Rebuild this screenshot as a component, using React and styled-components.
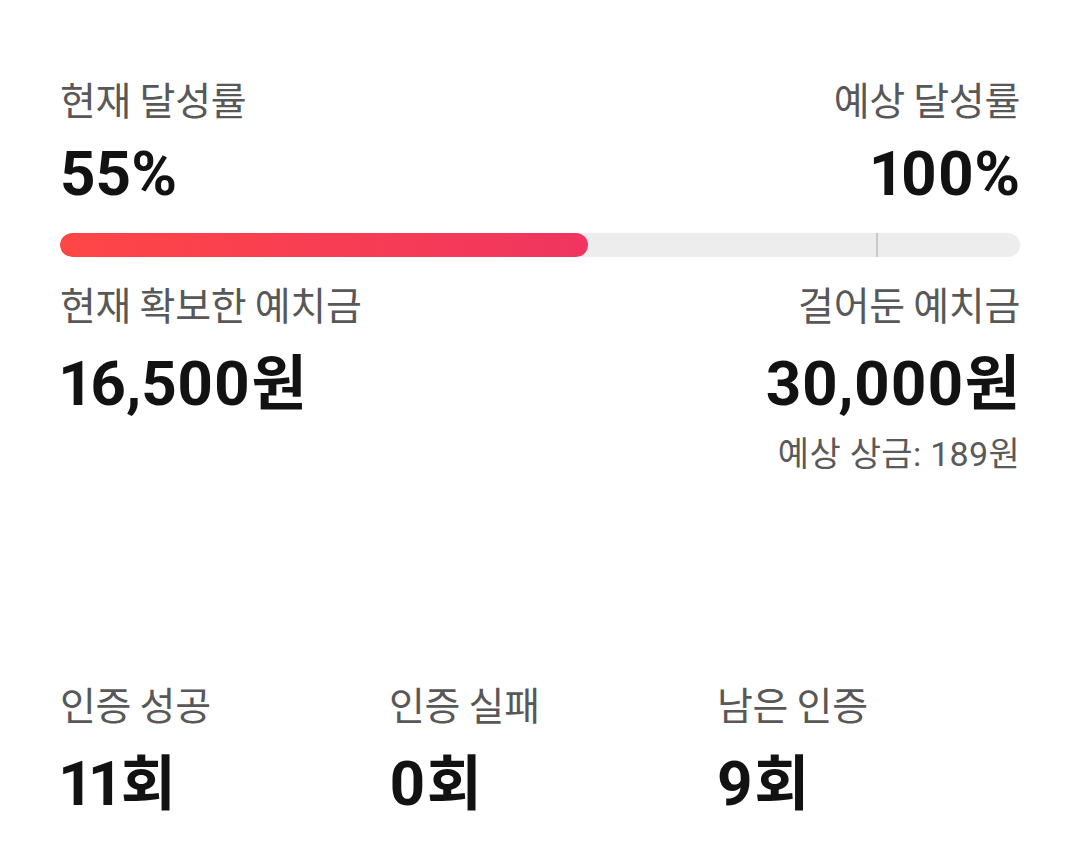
import React from "react";
import styled, { createGlobalStyle } from "styled-components";

const Global = createGlobalStyle`
  html, body { margin: 0; padding: 0; background: #ffffff; }
  body { font-family: "Noto Sans CJK KR", sans-serif; -webkit-font-smoothing: antialiased; }
`;

const Page = styled.div`
  width: 1080px;
  box-sizing: border-box;
  padding: 73px 60px 40px;
  display: flex;
  flex-direction: column;
`;

const Row = styled.div`
  display: flex;
  justify-content: space-between;
  align-items: flex-start;
`;

const Stat = styled.div`
  display: flex;
  flex-direction: column;
  align-items: ${(p) => (p.$right ? "flex-end" : "flex-start")};
  text-align: ${(p) => (p.$right ? "right" : "left")};
`;

const Label = styled.div`
  font-family: "Noto Sans CJK KR", sans-serif;
  font-size: 39px;
  line-height: 50px;
  font-weight: 400;
  color: #585858;
  letter-spacing: -0.3px;
`;

const Value = styled.div`
  font-family: Roboto, "Noto Sans CJK KR", sans-serif;
  font-size: 62px;
  line-height: 72px;
  font-weight: 700;
  color: #121212;
  margin-top: 15px;
  font-variant-numeric: proportional-nums;
  font-feature-settings: "pnum" 1;
`;

const Unit = styled.span`
  font-family: "Noto Sans CJK KR", sans-serif;
  font-size: 60px;
  font-weight: 700;
  margin-left: 1px;
`;

const Sub = styled.div`
  font-family: Roboto, "Noto Sans CJK KR", sans-serif;
  font-size: 34px;
  line-height: 40px;
  color: #5a5a5a;
  letter-spacing: 0.3px;
  margin-top: 14px;
`;

const Track = styled.div`
  position: relative;
  height: 24px;
  border-radius: 12px;
  background: #ededed;
  margin: 23px 0 21px;
  overflow: hidden;
`;

const Fill = styled.div`
  height: 100%;
  border-radius: 12px;
  background: linear-gradient(90deg, #ff4646 0%, #f03560 100%);
`;

const Marker = styled.div`
  position: absolute;
  top: 0;
  bottom: 0;
  width: 2px;
  background: #c9c9c9;
`;

const Counts = styled.div`
  display: grid;
  grid-template-columns: 329px 328px 1fr;
  margin-top: 204px;
`;

function StatBlock({ label, value, unit, right, sub }) {
  return (
    <Stat $right={right}>
      <Label>{label}</Label>
      <Value>
        {value}
        {unit && <Unit>{unit}</Unit>}
      </Value>
      {sub && <Sub>{sub}</Sub>}
    </Stat>
  );
}

export default function App() {
  const current = 55;
  const marker = 85;
  return (
    <>
      <Global />
      <Page>
        <Row>
          <StatBlock label="현재 달성률" value="55%" />
          <StatBlock label="예상 달성률" value="100%" right />
        </Row>
        <Track>
          <Fill style={{ width: `${current}%` }} />
          <Marker style={{ left: `${marker}%` }} />
        </Track>
        <Row>
          <StatBlock label="현재 확보한 예치금" value="16,500" unit="원" />
          <StatBlock label="걸어둔 예치금" value="30,000" unit="원" right sub="예상 상금: 189원" />
        </Row>
        <Counts>
          <StatBlock label="인증 성공" value="11" unit="회" />
          <StatBlock label="인증 실패" value="0" unit="회" />
          <StatBlock label="남은 인증" value="9" unit="회" />
        </Counts>
      </Page>
    </>
  );
}
